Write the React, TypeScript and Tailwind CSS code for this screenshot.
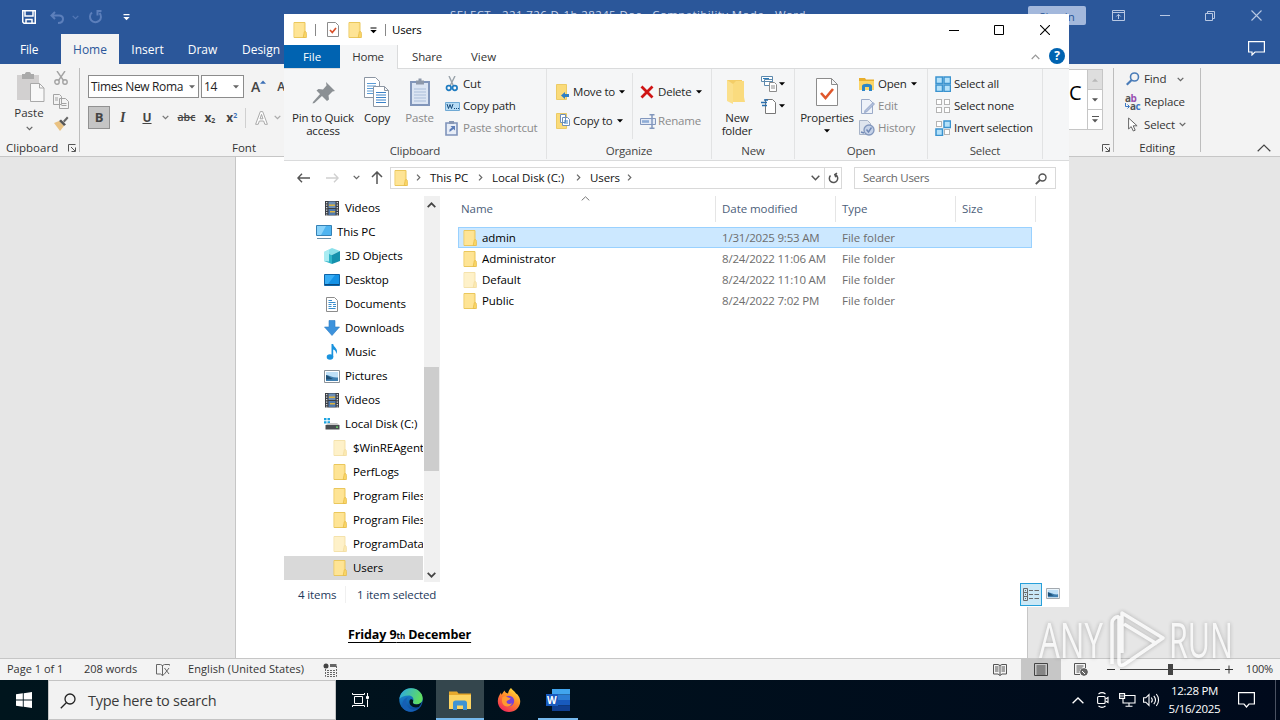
import React from 'react';

type IconProps = { className?: string };

/* ---------- shared glyphs ---------- */

function Chevron({ className = '' }: IconProps) {
  return (
    <svg className={className} width="7" height="5" viewBox="0 0 7 5" fill="none" stroke="currentColor" strokeWidth="1.3">
      <path d="M.7.9 3.5 3.6 6.3.9" />
    </svg>
  );
}

function Caret({ className = '' }: IconProps) {
  return (
    <svg className={className} width="6" height="4" viewBox="0 0 6 4" fill="currentColor">
      <path d="M0 .3h6L3 3.5z" />
    </svg>
  );
}

function Folder({ faded = false, className = '' }: IconProps & { faded?: boolean }) {
  return (
    <svg className={`shrink-0 ${faded ? 'opacity-50' : ''} ${className}`} width="14" height="16" viewBox="0 0 14 16">
      <path d="M1 .5h11v15H1z" fill="#fde08a" stroke="#eac75c" />
      <path d="M1.500 1h9v14h-9z" fill="#fee495" />
      <path d="M12 9.500c1 0 1.400.8 1.400 2v4h-3.200l.8-4c.2-1.300.4-2 1-2z" fill="#fbd768" stroke="#e6bb48" strokeWidth=".8" />
    </svg>
  );
}

function PictureIcon({ className = '' }: IconProps) {
  return (
    <svg className={`shrink-0 ${className}`} width="16" height="13" viewBox="0 0 16 13">
      <path d="M.5.5h15v12H.5z" fill="#fff" stroke="#8a9299" />
      <path d="M2 2h12v9H2z" fill="#bfe0f7" />
      <path d="M2 5c4 .5 7 3 12 2.500V11H2z" fill="#3f7fb0" />
      <path d="M2 5c3 1 5 3.500 7 4l-7 .5z" fill="#1f4f75" />
    </svg>
  );
}

function VideoIcon() {
  return (
    <svg className="shrink-0" width="15" height="16" viewBox="0 0 15 16">
      <path d="M1 1h14v14.500H1z" fill="#3b3f45" />
      <path d="M4.500 1.500h7V8h-7z" fill="#6d8fb8" />
      <path d="M4.500 9h7v6h-7z" fill="#4f79ae" />
      <path d="M5 4.500h6v1.500H5zM6 11h5v1.500H6z" fill="#d9b23f" />
      <path d="M2.700 2v13.500M13.300 2v13.500" stroke="#e8e8e8" strokeWidth="1.200" strokeDasharray="1.200 1.300" />
    </svg>
  );
}

/* ---------- Word ---------- */

function WordTitleBar() {
  return (
    <div className="flex h-[34px] items-center text-white">
      <svg className="ml-[22px]" width="14" height="14" viewBox="0 0 14 14" fill="none" stroke="#fff" strokeWidth="1.500">
        <path d="M.75.75h12.500v12.500H2L.75 12zM3 1v5h8V1M4 13V9.500h6V13" />
      </svg>
      <svg className="ml-[14px]" width="15" height="13" viewBox="0 0 15 13" fill="none" stroke="#5c7fbb" strokeWidth="2">
        <path d="M5 1 1.500 4.500 5 8M2 4.500h7c3 0 4 1.500 4 3.500s-1.500 4-5 4" />
      </svg>
      <Chevron className="ml-[7px] text-[#5277b5]" />
      <svg className="ml-[9px]" width="16" height="14" viewBox="0 0 16 14" fill="none" stroke="#5c7fbb" strokeWidth="2">
        <path d="M4 2.500A5.500 5.500 0 1 0 11.500 3M13.500 1h-4v4.500" />
      </svg>
      <svg className="ml-[19px]" width="7" height="7" viewBox="0 0 7 7" fill="#fff">
        <path d="M.5 0h6v1.200h-6zM.3 3h6.400L3.500 6.300z" />
      </svg>
      <div className="ml-[320px] w-[390px] self-start whitespace-nowrap pt-[7px] text-[11.500px] leading-[16px] tracking-[0.400px] text-[#c9d5ea]">
        SELECT - 221 726 D-1b 28245 Doc - Compatibility Mode - Word
      </div>
      <div className="ml-[188px] mt-[6px] h-[19px] w-[58px] self-start rounded-[2px] bg-[#a3b8dc] pt-[3px] text-center text-[11.500px] leading-[16px] text-[#2b5797]">
        Sign in
      </div>
      <svg className="mb-[3px] ml-[26px]" width="13" height="11" viewBox="0 0 13 11" fill="none" stroke="#b8c8e3">
        <path d="M.5.5h12v10H.5zM.5 2.500h12M6.500 9V4.500M4.300 6.500l2.200-2.200 2.200 2.200" />
      </svg>
      <svg className="mb-[4px] ml-[35px]" width="10" height="10" viewBox="0 0 10 10" stroke="#b8c8e3">
        <path d="M0 5.500h10" />
      </svg>
      <svg className="mb-[3px] ml-[35px]" width="10" height="10" viewBox="0 0 10 10" fill="none" stroke="#b8c8e3">
        <path d="M.5 2.500h7v7h-7zM2.500 2.500v-2h7v7h-2" />
      </svg>
      <svg className="mb-[4px] ml-[36px]" width="11" height="11" viewBox="0 0 11 11" stroke="#b8c8e3" strokeWidth="1.100">
        <path d="M.5.500l10 10M10.500.500l-10 10" />
      </svg>
    </div>
  );
}

function WordTabs() {
  return (
    <div className="flex h-[30px] items-stretch text-[12px] leading-[31px] text-white">
      <div className="w-[61px] pl-[20px] tracking-[-0.200px]">File</div>
      <div className="w-[58px] bg-[#f3f3f3] text-center text-[#2b579a]">Home</div>
      <div className="w-[57px] text-center">Insert</div>
      <div className="w-[53px] text-center">Draw</div>
      <div className="w-[64px] text-center">Design</div>
      <svg className="ml-auto mr-[15px] mt-[7px]" width="17" height="15" viewBox="0 0 17 15" fill="none" stroke="#fff" strokeWidth="1.200">
        <path d="M.6.600h15.800v10.400H7L4 14v-3H.600z" />
      </svg>
    </div>
  );
}

function Launcher({ className = '' }: IconProps) {
  return (
    <svg className={className} width="8" height="8" viewBox="0 0 8 8" fill="none" stroke="#555">
      <path d="M.5 7.500v-7h7M3 3l4 4M7.500 3.500v4h-4" />
    </svg>
  );
}

function WordClipboardGroup() {
  return (
    <div className="my-[4px] flex w-[80px] flex-col border-r border-[#bdbdbd]">
      <div className="flex h-[71px] shrink-0">
        <div className="ml-[8px] flex w-[42px] flex-col items-center pt-[4px]">
          <svg className="ml-[3px]" width="29" height="30" viewBox="0 0 29 30">
            <path d="M1 3h22v25H1z" fill="#d2d0d0" />
            <path d="M6 2h3c0-3 6-3 6 0h3v5H6z" fill="#aaa" />
            <path d="M14.500 11.500h9l4.500 4.500v13.500H14.500z" fill="#f8f8f8" stroke="#a9a9a9" />
            <path d="M23.500 11.500V16H28" fill="none" stroke="#a9a9a9" />
          </svg>
          <span className="mt-[3px] text-[11.500px] leading-[16px] text-[#333]">Paste</span>
          <Chevron className="mt-[5px] text-[#666]" />
        </div>
        <div className="flex w-[22px] flex-col items-center">
          <svg className="mt-[3px]" width="14" height="14" viewBox="0 0 14 14" fill="none" stroke="#a3a3a3" strokeWidth="1.400">
            <path d="M3 0l6.500 9.500M11 0L4.500 9.500" />
            <circle cx="3" cy="11" r="2.200" />
            <circle cx="11" cy="11" r="2.200" />
          </svg>
          <svg className="mt-[9px]" width="16" height="15" viewBox="0 0 16 15" fill="#f3f3f3" stroke="#a3a3a3">
            <path d="M.5.500h6l2 2v8h-8zM6.500 4.500h6l3 3v7h-9z" />
            <path d="M2 4h3M2 6h3M8.500 9.500h5M8.500 11.500h5" />
          </svg>
          <svg className="mt-[7px]" width="16" height="15" viewBox="0 0 16 15">
            <path d="M1 7l5-2 5 5-4 5z" fill="#eac282" />
            <path d="M6 5l2-1.500 5 5L11 10z" fill="#555" />
            <path d="M10 5l4-4.500L15.500 2l-4 4.500z" fill="#666" />
          </svg>
        </div>
      </div>
      <div className="flex h-[13px] items-start pl-[6px] text-[11.500px] leading-[18px] text-[#333]">
        Clipboard
        <Launcher className="ml-auto mr-[3px] mt-[5px]" />
      </div>
    </div>
  );
}

function WordFontGroup() {
  return (
    <div className="flex w-[989px] flex-col pl-[8px] text-[#444]">
      <div className="mt-[11px] flex h-[23px] items-center">
        <div className="flex h-[23px] w-[111px] items-center border border-[#8c8c8c] bg-white pl-[2px] text-[12px] tracking-[-0.350px] text-[#222]">
          Times New Roma
          <Caret className="ml-auto mr-[3px] text-[#666]" />
        </div>
        <div className="ml-[2px] flex h-[23px] w-[43px] items-center border border-[#8c8c8c] bg-white pl-[2px] text-[12px] tracking-[-0.400px] text-[#222]">
          14
          <Caret className="ml-auto mr-[4px] text-[#666]" />
        </div>
        <span className="ml-[7px] text-[14px] font-semibold">A</span>
        <Caret className="mb-[10px] rotate-180 text-[#3b6fb6]" />
        <span className="ml-[11px] text-[12px] font-semibold">A</span>
      </div>
      <div className="mt-[8px] flex h-[23px] items-center text-[13px]">
        <span className="flex h-[23px] w-[22px] items-center justify-center border border-[#919191] bg-[#c5c5c5] font-bold">B</span>
        <span className="ml-[10px] font-['Liberation_Serif'] text-[14px] font-bold italic">I</span>
        <span className="ml-[17px] text-[12px] font-bold underline">U</span>
        <Chevron className="ml-[10px] text-[#777]" />
        <span className="ml-[9px] text-[10.500px] font-semibold line-through">abc</span>
        <span className="ml-[9px] text-[12px] font-bold">x<sub className="text-[7px]">2</sub></span>
        <span className="ml-[11px] text-[12px] font-bold">x<sup className="text-[7px] text-[#3b6fb6]">2</sup></span>
        <span className="ml-[8px] h-[20px] w-px bg-[#d0d0d0]" />
        <svg className="ml-[9px]" width="13" height="14" viewBox="0 0 13 14" fill="#fff" stroke="#a9a9a9">
          <path d="M5.300.6h2.400l4.700 12.700H9.800L8.700 10H4.300l-1.100 3.300H.6zM5 7.800h3L6.500 3.400z" />
        </svg>
        <Chevron className="ml-[6px] text-[#aaa]" />
      </div>
      <div className="mt-[10px] pl-[144px] text-[11.500px] leading-[18px] text-[#333]">Font</div>
    </div>
  );
}

function WordEditingGroup() {
  return (
    <>
      {/* end of the styles gallery */}
      <div className="flex w-[44px] flex-col">
        <div className="mt-[5px] flex h-[61px] w-[34px] border-y border-[#c6c6c6] bg-white">
          <span className="w-[18px] text-[20px] leading-[46px] text-black">C</span>
          <div className="flex w-[16px] flex-col border-x border-[#c6c6c6]">
            <div className="flex flex-1 items-center justify-center bg-[#dedede] text-[#b8b8b8]"><Caret className="rotate-180" /></div>
            <div className="flex flex-1 items-center justify-center border-y border-[#c6c6c6] text-[#555]"><Caret /></div>
            <div className="flex flex-1 flex-col items-center justify-center gap-[2px] text-[#555]"><span className="h-px w-[7px] bg-[#555]" /><Caret /></div>
          </div>
        </div>
        <Launcher className="ml-[33px] mt-[14px]" />
      </div>
      <div className="my-[4px] flex w-[88px] flex-col border-x border-[#bdbdbd] text-[11.500px] tracking-[-0.150px] text-[#333]">
        <div className="flex h-[22px] shrink-0 items-center pl-[12px]">
          <svg width="14" height="14" viewBox="0 0 14 14" fill="none" stroke="#4a7cb8" strokeWidth="1.600">
            <circle cx="8.500" cy="5" r="4" />
            <path d="M5.600 8 .800 12.800" strokeWidth="2.200" />
          </svg>
          <span className="ml-[4px]">Find</span>
          <Chevron className="ml-[11px] text-[#666]" />
        </div>
        <div className="flex h-[23px] shrink-0 items-center pl-[11px]">
          <span className="flex w-[16px] flex-col text-[10px] font-bold leading-[8px] tracking-[-0.500px] text-[#555]">
            <span>a<span className="text-[#9a4fb0]">b</span></span>
            <span className="flex items-start">
              <svg className="mt-px shrink-0" width="5" height="6" viewBox="0 0 5 6" fill="none" stroke="#3b78c4"><path d="M.5 0v3.500H4M2.500 1.500l2 2-2 2" /></svg>
              a<span className="text-[#3b78c4]">c</span>
            </span>
          </span>
          <span className="ml-[3px]">Replace</span>
        </div>
        <div className="flex h-[23px] shrink-0 items-center pl-[14px]">
          <svg width="10" height="15" viewBox="0 0 10 15" fill="#fff" stroke="#666">
            <path d="M.6 1v11l2.600-2.400L5.300 14l1.900-.8-2-4.400h3.900z" />
          </svg>
          <span className="ml-[6px]">Select</span>
          <Chevron className="ml-[4px] text-[#666]" />
        </div>
        <div className="mt-[3px] h-[13px] text-center leading-[18px]">Editing</div>
      </div>
      <svg className="ml-auto mr-[9px] mt-[80px]" width="14" height="8" viewBox="0 0 14 8" fill="none" stroke="#444" strokeWidth="1.200">
        <path d="M.7 7.200 7 1l6.300 6.200" />
      </svg>
    </>
  );
}

function WordStatusBar() {
  return (
    <div className="flex h-[22px] items-center border-t border-[#c6c6c6] bg-[#f3f3f3] text-[11px] text-[#333]">
      <span className="ml-[7px] w-[77px]">Page 1 of 1</span>
      <span className="w-[72px]">208 words</span>
      <svg width="14" height="13" viewBox="0 0 14 13" fill="none" stroke="#666">
        <path d="M6.500 2v10.500M.5 1.500h4l2 1 2-1h5v1M.5 1.500v9.500h4l2 1.500 2-1.500M8.500 5l4.500 6M13 5l-4.500 6" />
      </svg>
      <span className="ml-[18px] w-[135px] tracking-[0.080px]">English (United States)</span>
      <svg width="14" height="14" viewBox="0 0 14 14" fill="none" stroke="#666">
        <circle cx="3" cy="3" r="2.500" fill="#444" stroke="none" />
        <path d="M2.500 6v7.500h11V2.500H7M4 7.500h8M4 9.500h8M4 11.500h8" strokeDasharray="2 1" />
        <path d="M7 2.500h6.500" strokeWidth="3" />
      </svg>
      <svg className="ml-auto" width="14" height="13" viewBox="0 0 14 13" fill="none" stroke="#555">
        <path d="M7 2v10.500M.5 1.500H5l2 1 2-1h4.500v9.500H9l-2 1.500-2-1.500H.5zM2 4h3.500M2 6h3.500M2 8h3.500M8.500 4H12M8.500 6H12M8.500 8H12" />
      </svg>
      <div className="ml-[14px] flex h-full w-[40px] items-center justify-center bg-[#c6c6c6]">
        <svg width="14" height="13" viewBox="0 0 14 13" fill="none" stroke="#444">
          <path d="M.5.500h13v12H.500zM2.500 3h9M2.500 5h9M2.500 7h9M2.500 9h9M2.500 11h9" />
        </svg>
      </div>
      <svg className="ml-[13px]" width="14" height="13" viewBox="0 0 14 13" fill="none" stroke="#555">
        <path d="M6 11.500H.5V.5h11V5M2.500 3h7M2.500 5h6M2.500 7h4M2.500 9h3" />
        <circle cx="10" cy="9" r="3.300" fill="#666" />
        <path d="M8 8l3 3" stroke="#fff" />
      </svg>
      <span className="ml-[19px] h-px w-[8px] bg-[#333]" />
      <div className="ml-[5px] flex w-[100px] items-center">
        <span className="h-px w-[48px] bg-[#444]" />
        <span className="h-[11px] w-[5px] bg-[#444]" />
        <span className="h-px flex-1 bg-[#444]" />
      </div>
      <svg className="ml-[5px]" width="8" height="9" viewBox="0 0 8 9" stroke="#333"><path d="M0 4.500h8M4 .500v8" /></svg>
      <span className="ml-[13px] mr-[7px] tracking-[-0.200px]">100%</span>
    </div>
  );
}

function Word() {
  return (
    <div className="flex h-[680px] flex-col bg-[#2b579a]">
      <WordTitleBar />
      <WordTabs />
      <div className="flex h-[93px] border-b border-[#c6c6c6] bg-[#f3f3f3]">
        <WordClipboardGroup />
        <WordFontGroup />
        <WordEditingGroup />
      </div>
      <div className="flex-1 bg-[#e6e6e6]">
        <div className="ml-[235px] flex h-full w-[793px] items-end border-x border-[#c6c6c6] bg-white pb-[13px] pl-[112px]">
          <p className="text-[12.500px] font-bold leading-[18px] tracking-[-0.100px] text-black underline underline-offset-[3px]">
            Friday 9<span className="text-[8px]">th</span> December
          </p>
        </div>
      </div>
      <WordStatusBar />
    </div>
  );
}

/* ---------- Explorer ---------- */

function ExplorerTitleBar() {
  return (
    <div className="flex h-[31px] items-center bg-white">
      <Folder className="ml-[9px]" />
      <span className="ml-[8px] h-[12px] w-px bg-[#888]" />
      <svg className="ml-[11px]" width="12" height="15" viewBox="0 0 12 15" fill="#fff" stroke="#8c8c8c">
        <path d="M.5.500h8l3 3v11H.500z" />
        <path d="M3 8l2.300 2.500L9 6" fill="none" stroke="#d9502a" strokeWidth="1.700" />
      </svg>
      <Folder className="ml-[9px]" />
      <svg className="ml-[8px] mt-[2px]" width="7" height="7" viewBox="0 0 7 7"><path d="M.5.500h6v1h-6zM.3 3h6.400L3.500 6.300z" /></svg>
      <span className="ml-[8px] h-[12px] w-px bg-[#888]" />
      <span className="ml-[6px] text-[11.500px] tracking-[-0.200px] text-black">Users</span>
      <svg className="ml-auto" width="10" height="10" viewBox="0 0 10 10" stroke="#000"><path d="M0 5.500h10" /></svg>
      <svg className="ml-[35px]" width="10" height="10" viewBox="0 0 10 10" fill="none" stroke="#000"><path d="M.5.500h9v9h-9z" /></svg>
      <svg className="ml-[36px] mr-[19px]" width="10" height="10" viewBox="0 0 10 10" stroke="#000" strokeWidth="1.100"><path d="M0 0l10 10M10 0 0 10" /></svg>
    </div>
  );
}

function ExplorerTabs() {
  return (
    <div className="flex h-[24px] border-b border-[#dadbdc] bg-white text-[11.500px] leading-[24px] text-[#333]">
      <div className="h-[23px] w-[56px] bg-[#0063b1] text-center text-white">File</div>
      <div className="-mb-px w-[58px] border-r border-[#dadbdc] bg-[#f5f6f7] pr-px text-center tracking-[-0.300px]">Home</div>
      <div className="w-[58px] text-center tracking-[-0.200px]">Share</div>
      <div className="w-[55px] text-center">View</div>
      <svg className="ml-auto mt-[9px]" width="9" height="6" viewBox="0 0 9 6" fill="none" stroke="#999" strokeWidth="1.200"><path d="M.7 5 4.500 1.200 8.300 5" /></svg>
      <span className="ml-[9px] mr-[4px] mt-[3px] h-[16px] w-[16px] rounded-full bg-[#0063b1] text-center text-[12px] font-bold leading-[16px] text-white">?</span>
    </div>
  );
}

function Group({ label, width, children }: { label: string; width: string; children: React.ReactNode }) {
  return (
    <div className={`flex shrink-0 flex-col ${width}`}>
      <div className="flex h-[70px] border-r border-[#e2e3e4] pt-[4px]">{children}</div>
      <div className="h-[20px] border-r border-[#e2e3e4] text-center leading-[24px] text-[#444]">{label}</div>
    </div>
  );
}

function BigButton({ icon, width, disabled, children }: { icon: React.ReactNode; width: string; disabled?: boolean; children: React.ReactNode }) {
  return (
    <div className={`flex flex-col items-center text-center leading-[13px] ${width} ${disabled ? 'text-[#8a8a8a]' : ''}`}>
      <div className="flex h-[38px] shrink-0 items-center">{icon}</div>
      {children}
    </div>
  );
}

function SmallButton({ icon, disabled, caret, children }: { icon: React.ReactNode; disabled?: boolean; caret?: boolean; children?: React.ReactNode }) {
  return (
    <div className={`flex h-[22px] items-center whitespace-nowrap ${disabled ? 'text-[#8a8a8a]' : ''}`}>
      <span className="flex w-[18px] shrink-0 items-center">{icon}</span>
      {children}
      {caret && <Caret className={children ? 'ml-[4px] text-black' : 'text-black'} />}
    </div>
  );
}

function SelectIcon({ on }: { on: boolean[] }) {
  return (
    <svg width="16" height="16" viewBox="0 0 16 16">
      {on.map((active, i) => (
        <rect
          key={i}
          x={(i % 2 ? 9 : 1) + (active ? 0 : 0.5)}
          y={(i > 1 ? 9 : 1) + (active ? 0 : 0.5)}
          width={active ? 6.5 : 5}
          height={active ? 6.5 : 5}
          fill={active ? '#b4e1fa' : '#fff'}
          stroke={active ? '#3a93cf' : '#b4b4b4'}
          strokeWidth={active ? 1.5 : 1}
        />
      ))}
    </svg>
  );
}

function ExplorerRibbon() {
  return (
    <div className="flex h-[92px] border-b border-[#dadbdc] bg-[#f5f6f7] text-[11.500px] tracking-[-0.200px] text-[#262626]">
      <Group label="Clipboard" width="w-[263px]">
        <BigButton
          width="ml-[6px] w-[66px]"
          icon={
            <svg width="23" height="23" viewBox="0 0 23 23" fill="#8b9094">
              <path d="M13 1l9 9-2.500.5-4 4 .5 4-2 1.500L3.500 9.500 5.500 8l4.500.5 3.500-4z" transform="translate(1 0)" />
              <path d="M8.500 12.500 1 21l-.5 1.500L2.500 22l8-7.500z" />
            </svg>
          }
        >
          Pin to Quick access
        </BigButton>
        <BigButton
          width="w-[42px]"
          icon={
            <svg width="26" height="30" viewBox="0 0 26 30" fill="#fff" stroke="#8c96a3">
              <path d="M.5.500h11l4 4v16H.500z" />
              <path d="M3 6.500h9M3 9h9M3 11.500h9M3 14h9M3 16.500h9" stroke="#5b9bd5" />
              <path d="M9.500 9.500h11l4 4v16h-15zM20.500 9.500v4h4" />
              <path d="M12 15.500h10M12 18h10M12 20.500h10M12 23h10M12 25.500h10" stroke="#3b82c8" />
            </svg>
          }
        >
          Copy
        </BigButton>
        <BigButton
          width="w-[43px]"
          disabled
          icon={
            <svg width="20" height="28" viewBox="0 0 20 28">
              <path d="M1 4h18v23H1z" fill="#dce5f3" stroke="#8296ba" strokeWidth="2" />
              <path d="M6 2.500h2.500v-2h3v2H14v4H6z" fill="#8d98aa" />
              <path d="M4 11h12M4 14h12M4 17h12M4 20h12M4 23h12" stroke="#aabdd9" />
            </svg>
          }
        >
          Paste
        </BigButton>
        <div className="ml-[4px]">
          <SmallButton
            icon={
              <svg width="14" height="16" viewBox="0 0 14 16" fill="none" stroke="#9aa3ab" strokeWidth="1.400">
                <path d="M4 0l4.500 10M10 0 5 10" />
                <circle cx="3.800" cy="12" r="2.300" stroke="#1e7bc0" strokeWidth="1.700" />
                <circle cx="9.800" cy="12" r="2.300" stroke="#1e7bc0" strokeWidth="1.700" />
              </svg>
            }
          >
            Cut
          </SmallButton>
          <SmallButton
            icon={
              <svg width="15" height="9" viewBox="0 0 15 9" fill="none">
                <path d="M.5.500h14v8H.500z" fill="#b7dcf5" stroke="#6fa9d4" />
                <path d="M2 2l1.500 4.500L5 2.500l1.500 4L8 2M9 6.500h1M11 6.500h1M13 6.500h1" stroke="#164a7a" />
              </svg>
            }
          >
            Copy path
          </SmallButton>
          <SmallButton
            disabled
            icon={
              <svg width="13" height="15" viewBox="0 0 13 15">
                <path d="M1 2h11v12H1z" fill="#e7edf7" stroke="#7f93ba" strokeWidth="1.600" />
                <path d="M4 0h5v3H4z" fill="#8797b4" />
                <path d="M4.500 11V8.500l2.500-2L5.500 5H10v4.500L8.500 8z" fill="#5c7db8" />
              </svg>
            }
          >
            Paste shortcut
          </SmallButton>
        </div>
      </Group>

      <Group label="Organize" width="w-[165px]">
        <div className="flex w-[86px] flex-col gap-[7px] border-r border-[#e2e3e4] pl-[9px] pt-[8px]">
          <SmallButton
            caret
            icon={
              <svg width="15" height="16" viewBox="0 0 15 16">
                <path d="M.5.500h10v15H.500z" fill="#fadb7a" stroke="#eccb66" />
                <path d="M5 11.500 9 8v2h4v3H9v2z" fill="#2f7fc4" />
              </svg>
            }
          >
            <span className="-ml-px">Move to</span>
          </SmallButton>
          <SmallButton
            caret
            icon={
              <svg width="15" height="16" viewBox="0 0 15 16">
                <path d="M.5.500h10v15H.500z" fill="#fadb7a" stroke="#eccb66" />
                <path d="M4.500 1.500h5v8h-5zM6.500 4.500h5l2 2v6h-7z" fill="#fff" stroke="#6f8fb8" />
                <path d="M8 8h4M8 10h4" stroke="#3b82c8" />
              </svg>
            }
          >
            <span className="-ml-px">Copy to</span>
          </SmallButton>
        </div>
        <div className="flex flex-col gap-[7px] pl-[7px] pt-[8px]">
          <SmallButton
            caret
            icon={
              <svg width="14" height="14" viewBox="0 0 14 14" stroke="#cf1414" strokeWidth="2.800"><path d="M1.500 1.500l11 11M12.500 1.500l-11 11" /></svg>
            }
          >
            Delete
          </SmallButton>
          <SmallButton
            disabled
            icon={
              <svg width="16" height="15" viewBox="0 0 16 15" fill="none" stroke="#8297bd">
                <path d="M.5 4.500h15v6H.500z" fill="#e3eaf6" />
                <path d="M2 6.200h7v2.600H2z" fill="#8eacd6" stroke="none" />
                <path d="M9.500.800h5M9.500 14.200h5M12 1v13" strokeWidth="1.500" />
              </svg>
            }
          >
            Rename
          </SmallButton>
        </div>
      </Group>

      <Group label="New" width="w-[83px]">
        <BigButton
          width="w-[48px]"
          icon={
            <svg width="20" height="26" viewBox="0 0 20 26">
              <path d="M1 1h15v21H1z" fill="#f3cd67" />
              <path d="M1 1l6 4v20l-6-3z" fill="#fbe08c" />
              <path d="M7 5l3-3h8v16l1 5H7z" fill="#fadb7e" />
            </svg>
          }
        >
          <span className="pl-[2px]">New folder</span>
        </BigButton>
        <div className="ml-[1px]">
          <SmallButton
            caret
            icon={
              <svg width="16" height="16" viewBox="0 0 16 16" fill="#fff" stroke="#5d89ad">
                <path d="M.5.500h11v5H.500zM3.500 3.500h8v6h-8z" />
                <path d="M2 2.500h6" stroke="#2a7ab8" />
                <path d="M8.500 6.500h5l2 2v7h-7zM10 10h4M10 12h4" stroke="#8c8c8c" />
              </svg>
            }
          />
          <SmallButton
            caret
            icon={
              <svg width="16" height="16" viewBox="0 0 16 16" fill="#fff" stroke="#777">
                <path d="M4.500 1.500h7l3 3v11h-10z" />
                <path d="M0 4.500h6M1 7.500h5M3 2h4" stroke="#2a6fae" strokeWidth="1.300" />
              </svg>
            }
          />
        </div>
      </Group>

      <Group label="Open" width="w-[133px]">
        <BigButton
          width="w-[64px]"
          icon={
            <svg width="22" height="28" viewBox="0 0 22 28" fill="#fff" stroke="#8c8c8c">
              <path d="M.5.500h15l6 6v21H.500zM15.500.500v6h6" />
              <path d="M5 15l4.500 5L17 11" fill="none" stroke="#e0572c" strokeWidth="2.600" />
            </svg>
          }
        >
          Properties
          <Caret className="mt-[5px] text-black" />
        </BigButton>
        <div>
          <SmallButton
            caret
            icon={
              <svg width="16" height="14" viewBox="0 0 16 14">
                <path d="M0 1h6l1 1.500h8V9H0z" fill="#e8ae2c" />
                <path d="M0 4h15v9H0z" fill="#fbd568" />
                <path d="M3 14V9c0-3 10-3 10 0v5h-3v-4H6v4z" fill="#2c86c8" />
              </svg>
            }
          >
            <span className="ml-px">Open</span>
          </SmallButton>
          <SmallButton
            disabled
            icon={
              <svg className="ml-[2px]" width="14" height="15" viewBox="0 0 14 15" fill="#eef2f9" stroke="#9aaac8">
                <path d="M.5.500h8l3 3v11H.500z" />
                <path d="M4 11.500 12 3.500l1.500 1.500-8 8-2 .5z" fill="#b3c1dc" stroke="#8297bd" strokeWidth=".7" />
              </svg>
            }
          >
            <span className="ml-px">Edit</span>
          </SmallButton>
          <SmallButton
            disabled
            icon={
              <svg width="16" height="16" viewBox="0 0 16 16" fill="#dfe5ee" stroke="#a8b4c8">
                <path d="M.5.500h8l3 3v11H.500z" />
                <circle cx="10" cy="10" r="5" fill="#c5d2e8" stroke="#8297bd" strokeWidth="1.300" />
                <path d="M7.500 9.500 9.500 12 12.500 7.500M2 12l3 1" fill="none" stroke="#6f88b5" strokeWidth="1.400" />
              </svg>
            }
          >
            <span className="ml-px">History</span>
          </SmallButton>
        </div>
      </Group>

      <Group label="Select" width="w-[115px]">
        <div className="pl-[7px]">
          <SmallButton icon={<SelectIcon on={[true, true, true, true]} />}><span className="ml-px">Select all</span></SmallButton>
          <SmallButton icon={<SelectIcon on={[false, false, false, false]} />}><span className="ml-px">Select none</span></SmallButton>
          <SmallButton icon={<SelectIcon on={[false, true, true, false]} />}><span className="ml-px">Invert selection</span></SmallButton>
        </div>
      </Group>
    </div>
  );
}

function Crumb({ className = '' }: IconProps) {
  return (
    <svg className={`shrink-0 ${className}`} width="5" height="7" viewBox="0 0 5 7" fill="none" stroke="#666" strokeWidth="1.200"><path d="M1 .700 3.800 3.500 1 6.300" /></svg>
  );
}

function AddressBar() {
  return (
    <div className="flex h-[35px] items-center bg-white pb-[2px] text-[11.500px] tracking-[-0.100px] text-[#111]">
      <svg className="ml-[13px]" width="13" height="10" viewBox="0 0 13 10" fill="none" stroke="#555" strokeWidth="1.400"><path d="M5 .7.900 5 5 9.300M1 5h12" /></svg>
      <svg className="ml-[16px]" width="13" height="10" viewBox="0 0 13 10" fill="none" stroke="#d0d0d0" strokeWidth="1.400"><path d="M8 .7 12.100 5 8 9.300M12 5H0" /></svg>
      <Chevron className="ml-[14px] text-[#666]" />
      <svg className="ml-[11px]" width="12" height="13" viewBox="0 0 12 13" fill="none" stroke="#555" strokeWidth="1.500"><path d="M1 6l5-5 5 5M6 1v12" /></svg>
      <div className="ml-[7px] flex h-[22px] w-[452px] items-center whitespace-nowrap border border-[#d9d9d9] pl-[3px]">
        <Folder />
        <Crumb className="ml-[8px]" />
        <span className="ml-[9px] w-[41px]">This PC</span>
        <Crumb className="ml-[7px]" />
        <span className="ml-[9px] w-[76px]">Local Disk (C:)</span>
        <Crumb className="ml-[8px]" />
        <span className="ml-[9px] w-[30px]">Users</span>
        <Crumb className="ml-[7px]" />
        <svg className="ml-auto mr-[4px]" width="9" height="6" viewBox="0 0 9 6" fill="none" stroke="#555" strokeWidth="1.500"><path d="M.7.800 4.500 4.700 8.300.800" /></svg>
        <span className="flex h-full w-[17px] items-center justify-center border-l border-[#d9d9d9]">
          <svg width="11" height="12" viewBox="0 0 11 12" fill="none" stroke="#555" strokeWidth="1.500"><path d="M3.500 2.700A4.200 4.200 0 1 0 8.500 3.500M2 1.200l2.200 1.400-1 2.600" transform="translate(11 0) scale(-1 1)" /></svg>
        </span>
      </div>
      <div className="ml-[12px] flex h-[22px] w-[202px] items-center border border-[#d9d9d9] pl-[8px] tracking-[-0.300px] text-[#666]">
        Search Users
        <svg className="ml-auto mr-[8px] mt-[2px]" width="12" height="12" viewBox="0 0 12 12" fill="none" stroke="#555" strokeWidth="1.400"><circle cx="7.500" cy="4.500" r="3.500" /><path d="M5 7 .8 11.200" strokeWidth="1.800" /></svg>
      </div>
    </div>
  );
}

const navItems: { label: string; indent: string; icon: React.ReactNode; selected?: boolean }[] = [
  { label: 'Videos', indent: 'pl-[40px]', icon: <VideoIcon /> },
  {
    label: 'This PC',
    indent: 'pl-[32px]',
    icon: (
      <svg width="16" height="14" viewBox="0 0 16 14">
        <path d="M.5.500h15v10H.500z" fill="#4fb4f0" stroke="#3581b5" />
        <path d="M1 1h9L5 10H1z" fill="#8ad3fa" />
        <path d="M1 13.500h14" stroke="#6a8fa8" />
      </svg>
    ),
  },
  {
    label: '3D Objects',
    indent: 'pl-[40px]',
    icon: (
      <svg width="16" height="16" viewBox="0 0 16 16">
        <path d="M0 4l8-4 8 3-8 4z" fill="#8be0ea" />
        <path d="M0 4l8 3v9l-8-3z" fill="#2fb3c8" />
        <path d="M8 7l8-4v10l-8 3z" fill="#1591ad" />
        <path d="M0 4l5-2.500v12L0 13z" fill="#a9ecf2" />
      </svg>
    ),
  },
  {
    label: 'Desktop',
    indent: 'pl-[40px]',
    icon: (
      <svg width="16" height="12" viewBox="0 0 16 12">
        <path d="M.5.500h15v11H.500z" fill="#1492e6" stroke="#0d64a8" />
        <path d="M1 1h10L4 10H1z" fill="#38adf5" />
        <path d="M1 10.500h14" stroke="#0a4a80" />
      </svg>
    ),
  },
  {
    label: 'Documents',
    indent: 'pl-[40px]',
    icon: (
      <svg className="ml-[2px]" width="12" height="15" viewBox="0 0 12 15" fill="#fff" stroke="#8c8c8c">
        <path d="M.5.500h8l3 3v11H.500z" />
        <path d="M2.500 3.500H6M2.500 5.500h7M2.500 7.500h3M7 7.500h3M2.500 9.500h3M7 9.500h3M2.500 11.500h7" stroke="#3b8fce" />
      </svg>
    ),
  },
  {
    label: 'Downloads',
    indent: 'pl-[40px]',
    icon: (
      <svg width="16" height="16" viewBox="0 0 16 16"><path d="M5 .500h6V7h4.500L8 15.500.500 7H5z" fill="#3c92dc" stroke="#2b7cc4" strokeWidth=".6" /></svg>
    ),
  },
  {
    label: 'Music',
    indent: 'pl-[40px]',
    icon: (
      <svg className="ml-[2px]" width="12" height="16" viewBox="0 0 12 16" fill="#1a93de">
        <path d="M5.500 0h1.700c.3 3 4 4 3.800 7.500-.1 1.500-1 2.500-1 2.500.4-2.500-1-4-2.800-4.500V13H5.500z" />
        <ellipse cx="4" cy="13" rx="3.300" ry="2.700" />
      </svg>
    ),
  },
  { label: 'Pictures', indent: 'pl-[40px]', icon: <PictureIcon /> },
  { label: 'Videos', indent: 'pl-[40px]', icon: <VideoIcon /> },
  {
    label: 'Local Disk (C:)',
    indent: 'pl-[40px]',
    icon: (
      <svg width="16" height="14" viewBox="0 0 16 14">
        <path d="M0 1h2.500v2.200H0zM3.500 1H6v2.200H3.500zM0 4.200h2.500v2.200H0zM3.500 4.200H6v2.200H3.500z" fill="#1ba3e0" />
        <path d="M2 8l2-2h9l2.500 2z" fill="#c9c9c9" />
        <path d="M1.500 8h14v4.500h-14z" fill="#484c50" />
        <path d="M12 9.500h2v1.200h-2z" fill="#6be86b" />
      </svg>
    ),
  },
  { label: '$WinREAgent', indent: 'pl-[49px]', icon: <Folder faded /> },
  { label: 'PerfLogs', indent: 'pl-[49px]', icon: <Folder /> },
  { label: 'Program Files', indent: 'pl-[49px]', icon: <Folder /> },
  { label: 'Program Files', indent: 'pl-[49px]', icon: <Folder /> },
  { label: 'ProgramData', indent: 'pl-[49px]', icon: <Folder faded /> },
  { label: 'Users', indent: 'pl-[49px]', icon: <Folder />, selected: true },
];

const files = [
  { name: 'admin', date: '1/31/2025 9:53 AM', selected: true },
  { name: 'Administrator', date: '8/24/2022 11:06 AM' },
  { name: 'Default', date: '8/24/2022 11:10 AM', faded: true },
  { name: 'Public', date: '8/24/2022 7:02 PM' },
];

function NavPane() {
  return (
    <>
      <div className="w-[139px] overflow-hidden text-[11.500px] tracking-[-0.080px] text-black">
        {navItems.map((item, i) => (
          <div key={i} className={`flex h-[24px] items-center whitespace-nowrap ${item.indent} ${item.selected ? 'bg-[#d9d9d9]' : ''}`}>
            <span className={`flex shrink-0 items-center ${item.indent === 'pl-[49px]' ? 'w-[20px]' : 'w-[21px]'}`}>{item.icon}</span>
            {item.label}
          </div>
        ))}
      </div>
      <div className="ml-px flex w-[16px] flex-col items-center bg-[#f0f0f0] pr-px text-[#444]">
        <svg className="mt-[6px]" width="9" height="6" viewBox="0 0 9 6" fill="none" stroke="currentColor" strokeWidth="1.700"><path d="M.7 5.200 4.500 1.300 8.300 5.200" /></svg>
        <div className="mt-[159px] h-[104px] w-[15px] self-start bg-[#cdcdcd]" />
        <svg className="mb-[4px] mt-auto" width="9" height="6" viewBox="0 0 9 6" fill="none" stroke="currentColor" strokeWidth="1.700"><path d="M.7.800 4.500 4.700 8.300.800" /></svg>
      </div>
    </>
  );
}

function FileList() {
  return (
    <div className="flex-1 text-[11.500px]">
      <div className="flex h-[26px] pl-[18px] leading-[26px] tracking-[-0.050px] text-[#4c607a]">
        <div className="flex w-[258px] border-r border-[#e5e5e5] pl-[3px]">
          Name
          <svg className="ml-[88px]" width="9" height="5" viewBox="0 0 9 5" fill="none" stroke="#777"><path d="M.7 4.400 4.500.800 8.300 4.400" /></svg>
        </div>
        <div className="w-[120px] border-r border-[#e5e5e5] pl-[6px]">Date modified</div>
        <div className="w-[120px] border-r border-[#e5e5e5] pl-[6px]">Type</div>
        <div className="w-[80px] border-r border-[#e5e5e5] pl-[6px]">Size</div>
      </div>
      <div className="ml-[18px] mt-[5px] w-[574px]">
        {files.map((file) => (
          <div
            key={file.name}
            className={`flex h-[21px] items-center border pl-[4px] ${file.selected ? 'border-[#99d1ff] bg-[#cce8ff]' : 'border-transparent'}`}
          >
            <Folder faded={file.faded} />
            <span className="ml-[5px] w-[240px] tracking-[-0.050px] text-black">{file.name}</span>
            <span className="w-[120px] tracking-[-0.200px] text-[#6d6d6d]">{file.date}</span>
            <span className="text-[#6d6d6d]">File folder</span>
          </div>
        ))}
      </div>
    </div>
  );
}

function ExplorerWindow() {
  return (
    <div className="absolute left-[284px] top-[14px] flex h-[593px] w-[785px] flex-col bg-white">
      <ExplorerTitleBar />
      <ExplorerTabs />
      <ExplorerRibbon />
      <AddressBar />
      <div className="flex h-[386px]">
        <NavPane />
        <FileList />
      </div>
      <div className="flex flex-1 items-center pl-[14px] text-[11.500px] tracking-[-0.120px] text-[#1e395b]">
        <span className="w-[48px] border-r border-[#f0f0f0]">4 items</span>
        <span className="ml-[11px]">1 item selected</span>
        <div className="ml-auto flex h-[23px] w-[22px] items-center justify-center border border-[#26a0da] bg-[#cbe8f6]">
          <svg width="16" height="13" viewBox="0 0 16 13" fill="none" stroke="#6b6b6b">
            <path d="M.5.500h4v4h-4zM.5 4.500h4v4h-4zM.5 8.500h4v4h-4zM6 2.500h4M11.500 2.500H16M6 6.500h4M11.500 6.500H16M6 10.500h4M11.500 10.500H16M2 2.500h1M2 6.500h1M2 10.500h1" />
          </svg>
        </div>
        <PictureIcon className="mb-[2px] ml-[4px] mr-[9px] h-[11px] w-[14px]" />
      </div>
    </div>
  );
}

/* ---------- Taskbar ---------- */

function Taskbar() {
  return (
    <div className="flex h-[40px] bg-linear-to-r from-[#00151d] to-[#000a1c]">
      <div className="flex w-[48px] items-center justify-center">
        <svg width="16" height="16" viewBox="0 0 16 16" fill="#fff">
          <path d="M0 2.200 6.800 1.300v6.200H0zM7.700 1.200 16 0v7.500H7.700zM0 8.400h6.800v6.300L0 13.800zM7.700 8.400H16V16l-8.300-1.200z" />
        </svg>
      </div>
      <div className="flex w-[288px] items-center border border-[#c4c4c4] bg-[#f2f2f2] pt-px text-[14.500px] tracking-[-0.270px] text-[#3a3a3a]">
        <svg className="ml-[11px] mr-[12px]" width="16" height="16" viewBox="0 0 16 16" fill="none" stroke="#222" strokeWidth="1.300">
          <circle cx="10" cy="6" r="5" />
          <path d="M6.300 9.700.800 15.200" />
        </svg>
        Type here to search
      </div>
      <div className="flex w-[48px] items-center justify-center">
        <svg width="17" height="16" viewBox="0 0 17 16" fill="none" stroke="#fff">
          <path d="M2.500 4.500h8v7h-8zM.5 1v1.500h12V1M.5 15v-1.500h12V15M15.500 1v3M15.500 7.500V15" />
          <path d="M14.500 4.500h2v2h-2z" fill="#fff" />
        </svg>
      </div>
      <div className="flex w-[52px] items-center justify-center pl-[2px]">
        <svg width="24" height="24" viewBox="0 0 24 24">
          <defs>
            <linearGradient id="edgeTop" x1="0" y1="0" x2="1" y2=".3"><stop stopColor="#2aa6e8" /><stop offset="1" stopColor="#5fdd62" /></linearGradient>
            <linearGradient id="edgeLow" x1="0" y1="0" x2=".4" y2="1"><stop stopColor="#1e9be0" /><stop offset="1" stopColor="#0c4a9c" /></linearGradient>
          </defs>
          <circle cx="12" cy="12" r="11.700" fill="url(#edgeLow)" />
          <path d="M.4 11C1.500 4.500 6 .300 12 .300c7 0 11.700 5 11.700 10 0 4-3 6-6.200 6-2.600 0-4-1-3.500-2.300 1.600-4-1-6.500-4.500-6.500C5.500 7.500 2 9 .4 11z" fill="url(#edgeTop)" />
          <path d="M14 14c-.5 1.300.9 2.400 3.500 2.400 2 0 4.200-.9 5.300-2.400-.6 1.700-1.600 3.500-3 5-5.500 1.600-10-1.500-9.300-6 .2-1.300 1.300-2 2.400-1.700 1.200.4 1.600 1.500 1.100 2.700z" fill="#00151d" />
          <path d="M9.500 9c-3 2-3 8 .5 11 2.500 2 6 2.200 9 .5-2 2-4.500 3.200-7.500 3.200C6 23.500 2.500 20 3.500 15 4.200 11.800 6.500 9.500 9.500 9z" fill="#155fb4" />
        </svg>
      </div>
      <div className="flex w-[48px] items-center justify-center border-b-2 border-[#76b9ed] bg-[#34464d] pt-[2px]">
        <svg width="22" height="20" viewBox="0 0 22 20">
          <path d="M0 1.500h8l1.500 2H22V18H0z" fill="#e7a92c" />
          <path d="M0 5h22v14H0z" fill="#fcd462" />
          <path d="M4 20v-7c0-1.500 1-2.500 2.500-2.500h9c1.500 0 2.500 1 2.500 2.500v7h-4v-4.500H8V20z" fill="#3f93d3" />
        </svg>
      </div>
      <div className="flex w-[50px] items-center justify-center">
        <svg width="24" height="24" viewBox="0 0 24 24">
          <defs>
            <linearGradient id="fox" x1=".8" y1="0" x2=".2" y2="1"><stop stopColor="#ffe63c" /><stop offset=".45" stopColor="#ff8a2a" /><stop offset="1" stopColor="#f0205d" /></linearGradient>
          </defs>
          <path d="M14 0c1 2 3.500 3 5 5.500 2 1 4.500 4.500 4.200 8.500C22.700 20 18 24 12 24S.600 19.500.800 13c.1-3.500 1.500-6 3.200-8.500 0 1 .3 1.700.7 2.200C5.500 5 7 3.500 7.500 2.500 8 4 9 5.200 11 5.500 11.500 3 12.500 1 14 0z" fill="url(#fox)" />
          <circle cx="12" cy="13" r="5.200" fill="#7542d8" />
          <path d="M5.500 9c2-1.500 4-.8 5.500.5 1.500.200 2.500.5 2.500 1.200-1.300 1.600-3.500 1.300-4 3 .3 2.200 3 3 5.500 1.500-1.500 4-7.500 4.500-9.500 0-.800-2-.7-4 0-6.200z" fill="#ff9a30" />
        </svg>
      </div>
      <div className="mx-[4px] flex w-[40px] items-center justify-center border-b-2 border-[#76b9ed] pt-[2px]">
        <svg width="24" height="22" viewBox="0 0 24 22">
          <path d="M6 0h18v5.500H6z" fill="#41a5ee" />
          <path d="M6 5.500h18V11H6z" fill="#2b7cd3" />
          <path d="M6 11h18v5.500H6z" fill="#185abd" />
          <path d="M6 16.500h18V22H6z" fill="#103f91" />
          <path d="M0 5h12v12H0z" fill="#185abd" />
          <text x="1" y="14.700" fill="#fff" fontSize="10" fontWeight="700" fontFamily="Open Sans">W</text>
        </svg>
      </div>

      <div className="ml-auto flex items-center text-white">
        <svg width="12" height="7" viewBox="0 0 12 7" fill="none" stroke="#fff" strokeWidth="1.300"><path d="M.6 6.300 6 1l5.400 5.300" /></svg>
        <svg className="ml-[13px]" width="12" height="16" viewBox="0 0 12 16" fill="none" stroke="#fff" strokeWidth="1.100">
          <rect x=".6" y="4.500" width="7.500" height="7" rx="1" />
          <path d="M8.500 7 11 5.500v5L8.500 9M1.500 2C3.500.500 6.500.500 8.500 2M1.500 14c2 1.500 5 1.500 7 0" />
        </svg>
        <svg className="ml-[10px]" width="17" height="14" viewBox="0 0 17 14" fill="none" stroke="#fff" strokeWidth="1.100">
          <path d="M6 2.500h10v7.500H4V6M10 10v3M6.500 13.300h7M.6.600h5v4.800h-5zM.6 3h5" />
        </svg>
        <svg className="ml-[7px]" width="17" height="14" viewBox="0 0 17 14" fill="none" stroke="#fff" strokeWidth="1.100">
          <path d="M.6 4.800h2.200L6 1.500v11L2.800 9.200H.6zM8.300 4.500c1.200 1.500 1.200 3.500 0 5M10.800 2.800c2 2.500 2 6 0 8.400M13.300 1c3 3.500 3 8.500 0 12" />
        </svg>
        <div className="ml-[7px] w-[54px] text-center text-[11.500px] leading-[18px] tracking-[-0.300px]">
          <div className="mr-[-1px]">12:28 PM</div>
          <div className="mr-[-1px]">5/16/2025</div>
        </div>
        <svg className="ml-[17px] mr-[20px]" width="17" height="16" viewBox="0 0 17 16" fill="none" stroke="#fff" strokeWidth="1.200">
          <path d="M.6.600h15.800V12H11l-2.500 3L6 12H.600z" />
        </svg>
        <span className="mr-[4px] h-full w-px bg-[#4a5262]" />
      </div>
    </div>
  );
}

function Watermark() {
  return (
    <svg
      className="absolute left-[1034px] top-[604px] drop-shadow-[0_0_2px_rgba(0,0,0,0.350)]"
      width="204"
      height="72"
      viewBox="0 0 204 72"
      fill="none"
      fontFamily="Open Sans"
      fontSize="49"
      opacity=".7"
    >
      <text x="5" y="54" fill="#fff" textLength="64" lengthAdjust="spacingAndGlyphs">ANY</text>
      <text x="135" y="54" fill="#fff" textLength="64" lengthAdjust="spacingAndGlyphs">RUN</text>
      <path d="M78 60V19c0-4 4-7 7-6M88 49V9l41 25-38 26c-3 2-6 2-6-2V12M90 20l33 20" stroke="#fff" strokeWidth="3.500" strokeLinejoin="round" />
    </svg>
  );
}

export default function App() {
  return (
    <div className="relative h-[720px] w-[1280px] select-none overflow-hidden font-['Open_Sans','Noto_Sans',sans-serif]">
      <Word />
      <Taskbar />
      <ExplorerWindow />
      <Watermark />
    </div>
  );
}
